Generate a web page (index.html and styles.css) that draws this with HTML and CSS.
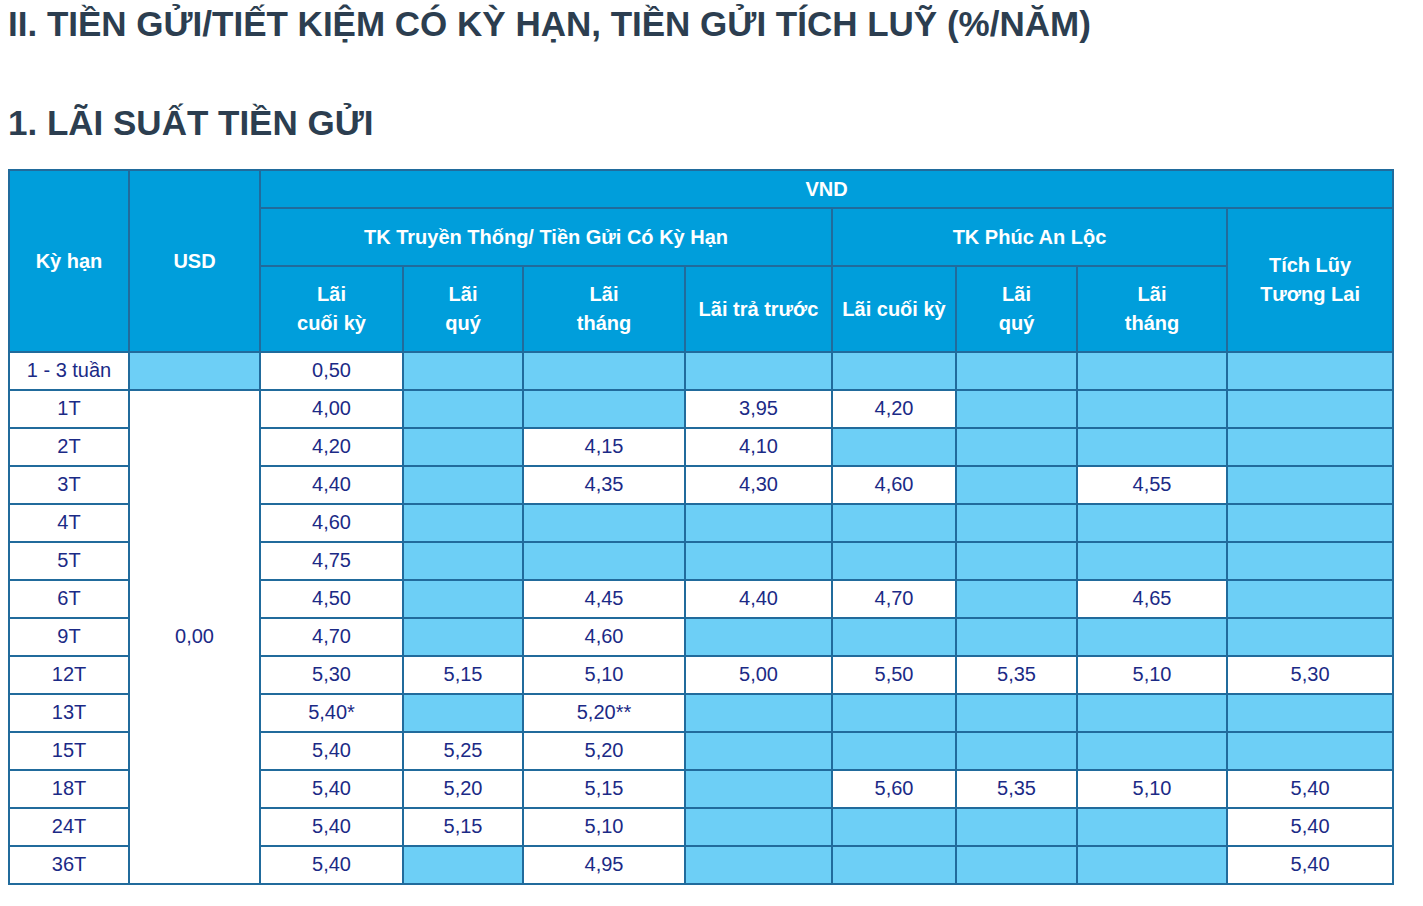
FILE: index.html
```html
<!DOCTYPE html>
<html lang="vi">
<head>
<meta charset="utf-8">
<title>Lãi suất tiền gửi</title>
<link rel="stylesheet" href="styles.css">
</head>
<body>
<div class="page">
  <h1 class="title">II. TIỀN GỬI/TIẾT KIỆM CÓ KỲ HẠN, TIỀN GỬI TÍCH LUỸ (%/NĂM)</h1>
  <h2 class="subtitle">1. LÃI SUẤT TIỀN GỬI</h2>
  <table class="rates">
    <colgroup>
      <col class="c1"><col class="c2"><col class="c3"><col class="c4"><col class="c5">
      <col class="c6"><col class="c7"><col class="c8"><col class="c9"><col class="c10">
    </colgroup>
    <thead>
      <tr class="h1">
        <th rowspan="3">Kỳ hạn</th>
        <th rowspan="3">USD</th>
        <th colspan="8">VND</th>
      </tr>
      <tr class="h2">
        <th colspan="4">TK Truyền Thống/ Tiền Gửi Có Kỳ Hạn</th>
        <th colspan="3">TK Phúc An Lộc</th>
        <th rowspan="2">Tích Lũy<br>Tương Lai</th>
      </tr>
      <tr class="h3">
        <th>Lãi<br>cuối kỳ</th>
        <th>Lãi<br>quý</th>
        <th>Lãi<br>tháng</th>
        <th>Lãi trả trước</th>
        <th>Lãi cuối kỳ</th>
        <th>Lãi<br>quý</th>
        <th>Lãi<br>tháng</th>
      </tr>
    </thead>
    <tbody>
      <tr><td>1 - 3 tuần</td><td class="e"></td><td>0,50</td><td class="e"></td><td class="e"></td><td class="e"></td><td class="e"></td><td class="e"></td><td class="e"></td><td class="e"></td></tr>
      <tr><td>1T</td><td rowspan="13">0,00</td><td>4,00</td><td class="e"></td><td class="e"></td><td>3,95</td><td>4,20</td><td class="e"></td><td class="e"></td><td class="e"></td></tr>
      <tr><td>2T</td><td>4,20</td><td class="e"></td><td>4,15</td><td>4,10</td><td class="e"></td><td class="e"></td><td class="e"></td><td class="e"></td></tr>
      <tr><td>3T</td><td>4,40</td><td class="e"></td><td>4,35</td><td>4,30</td><td>4,60</td><td class="e"></td><td>4,55</td><td class="e"></td></tr>
      <tr><td>4T</td><td>4,60</td><td class="e"></td><td class="e"></td><td class="e"></td><td class="e"></td><td class="e"></td><td class="e"></td><td class="e"></td></tr>
      <tr><td>5T</td><td>4,75</td><td class="e"></td><td class="e"></td><td class="e"></td><td class="e"></td><td class="e"></td><td class="e"></td><td class="e"></td></tr>
      <tr><td>6T</td><td>4,50</td><td class="e"></td><td>4,45</td><td>4,40</td><td>4,70</td><td class="e"></td><td>4,65</td><td class="e"></td></tr>
      <tr><td>9T</td><td>4,70</td><td class="e"></td><td>4,60</td><td class="e"></td><td class="e"></td><td class="e"></td><td class="e"></td><td class="e"></td></tr>
      <tr><td>12T</td><td>5,30</td><td>5,15</td><td>5,10</td><td>5,00</td><td>5,50</td><td>5,35</td><td>5,10</td><td>5,30</td></tr>
      <tr><td>13T</td><td>5,40*</td><td class="e"></td><td>5,20**</td><td class="e"></td><td class="e"></td><td class="e"></td><td class="e"></td><td class="e"></td></tr>
      <tr><td>15T</td><td>5,40</td><td>5,25</td><td>5,20</td><td class="e"></td><td class="e"></td><td class="e"></td><td class="e"></td><td class="e"></td></tr>
      <tr><td>18T</td><td>5,40</td><td>5,20</td><td>5,15</td><td class="e"></td><td>5,60</td><td>5,35</td><td>5,10</td><td>5,40</td></tr>
      <tr><td>24T</td><td>5,40</td><td>5,15</td><td>5,10</td><td class="e"></td><td class="e"></td><td class="e"></td><td class="e"></td><td>5,40</td></tr>
      <tr><td>36T</td><td>5,40</td><td class="e"></td><td>4,95</td><td class="e"></td><td class="e"></td><td class="e"></td><td class="e"></td><td>5,40</td></tr>
    </tbody>
  </table>
</div>
</body>
</html>
```

FILE: styles.css
```css
html, body {
  margin: 0;
  padding: 0;
  background: #ffffff;
}

.page {
  padding: 4px 8px 0 8px;
  font-family: "Liberation Sans", Arial, sans-serif;
}

.title {
  margin: 0;
  font-size: 35px;
  line-height: 40px;
  font-weight: bold;
  color: #2c3e50;
}

.subtitle {
  margin: 59px 0 0 0;
  font-size: 35px;
  line-height: 40px;
  font-weight: bold;
  color: #2c3e50;
}

.rates {
  margin-top: 26px;
  border-collapse: collapse;
  table-layout: fixed;
  width: 1384px;
  font-size: 20px;
}

.c1 { width: 120px; }
.c2 { width: 131px; }
.c3 { width: 143px; }
.c4 { width: 120px; }
.c5 { width: 162px; }
.c6 { width: 147px; }
.c7 { width: 124px; }
.c8 { width: 121px; }
.c9 { width: 150px; }
.c10 { width: 166px; }

.rates th,
.rates td {
  border: 2px solid #216b9c;
  padding: 0;
  text-align: center;
  vertical-align: middle;
}

.rates th {
  background: #009edb;
  color: #ffffff;
  font-weight: bold;
  line-height: 29px;
}

.rates td {
  background: #ffffff;
  color: #1b2a86;
  line-height: 22px;
  padding-bottom: 2px;
}

.rates td.e {
  background: #6dcff6;
}

.rates tr.h1 { height: 38px; }
.rates tr.h2 { height: 58px; }
.rates tr.h3 { height: 86px; }
.rates tbody tr { height: 38px; }
```
